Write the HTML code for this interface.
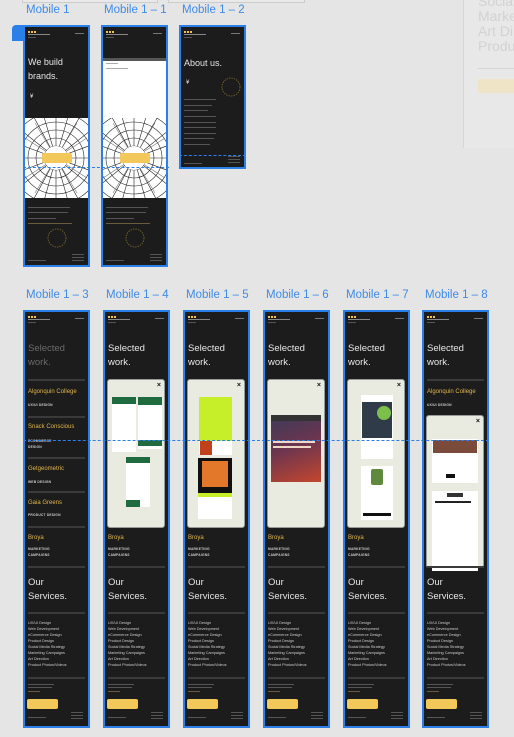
<!DOCTYPE html>
<html><head><meta charset="utf-8">
<style>
*{margin:0;padding:0;box-sizing:border-box}
body{width:514px;height:737px;background:#e5e5e5;position:relative;overflow:hidden;font-family:"Liberation Sans",sans-serif}
.lbl{position:absolute;color:#3d8be8;font-size:11.5px;white-space:nowrap}
.f{position:absolute;width:67px;border:2px solid #2b7fe9;background:#1c1c1c;overflow:hidden}
.f>*{position:absolute}
.logo{left:3px;top:4px;width:24px;height:8px}
.logo i{position:absolute;top:0;width:2px;height:2px;background:#f2c14e}
.logo b{position:absolute;top:3px;left:0;width:22px;height:1px;background:#888}
.logo s{position:absolute;top:6px;left:0;width:8px;height:1px;background:#555}
.nav{right:4px;top:6px;width:9px;height:1px;background:#777}
.big{left:3px;font-size:9.5px;line-height:14px;color:#e6e6e6;white-space:nowrap}
.hr{left:3px;width:57px;height:2px;background:#3a3a3a}
.y{left:3px;font-size:6px;color:#e2b54a;white-space:nowrap}
.cap{left:3px;font-size:3.3px;font-weight:bold;color:#ccc;line-height:6px;letter-spacing:.2px;white-space:nowrap}
.list{left:3px;font-size:3.8px;line-height:6px;color:#ccc;white-space:nowrap}
.sm{left:3px;width:30px;height:1px;background:#555}
.btn{left:2px;width:31px;height:10px;background:#f3c85a;border-radius:2px}
.ft{height:1px;background:#555}
.modal{left:2px;width:58px;background:#e9ebe0;border-radius:3px;border:1px solid #9a9a9a}
.x{position:absolute;right:3px;top:2px;font-size:7px;font-weight:bold;color:#111}
.dash{position:absolute;height:0;border-top:1px dashed #2b7fe9}
</style></head><body>

<div style="position:absolute;left:22px;top:0;width:136px;height:3px;border:1px solid #ccc;border-top:0;background:#e9e9e9"></div>
<div style="position:absolute;left:168px;top:0;width:137px;height:3px;border:1px solid #ccc;border-top:0;background:#e9e9e9"></div>
<div style="position:absolute;left:463px;top:0;width:51px;height:148px;background:#e8e8e8;border-left:1px solid #d6d6d6;color:#d2d2d2;font-size:14px;line-height:15px;padding:0 0 0 14px;white-space:nowrap;overflow:hidden">
<div style="margin-top:-6px">Social M</div><div>Marketi</div><div>Art Dire</div><div>Product</div>
<div style="margin-top:14px;width:40px;height:1px;background:#d6d6d6"></div>
<div style="margin-top:10px;width:40px;height:14px;background:#efe5c6"></div>
</div>

<div class="lbl" style="left:26px;top:4px">Mobile 1</div>
<div class="lbl" style="left:104px;top:4px">Mobile 1 – 1</div>
<div class="lbl" style="left:182px;top:4px">Mobile 1 – 2</div>
<div style="position:absolute;left:12px;top:25px;width:13px;height:16px;background:#2b7fe9;border-radius:4px 0 0 0"></div>

<svg width="0" height="0" style="position:absolute"><defs>
<g id="pat">
<rect width="63" height="80" fill="#fff"/>
<g stroke="#222" stroke-width=".6" fill="none">
<circle cx="31" cy="40" r="12"/><circle cx="31" cy="40" r="20"/><circle cx="31" cy="40" r="28"/><circle cx="31" cy="40" r="36"/><circle cx="31" cy="40" r="46"/>
<path d="M31 40L31 -10M31 40L45 -8M31 40L57 -5M31 40L75 5M31 40L80 22M31 40L80 40M31 40L80 58M31 40L75 75M31 40L57 88M31 40L45 90M31 40L31 90M31 40L17 90M31 40L5 88M31 40L-13 75M31 40L-18 58M31 40L-18 40M31 40L-18 22M31 40L-13 5M31 40L5 -8M31 40L17 -8"/>
<path d="M10 5L52 75M52 5L10 75M0 20L62 60M0 60L62 20" stroke="#777"/>
</g>
<circle cx="31" cy="40" r="12" fill="#fff"/>
<rect x="17" y="35" width="30" height="10" rx="2" fill="#f3c85a"/>
</g></defs></svg>

<!-- Mobile 1 -->
<div class="f" style="left:23px;top:25px;height:242px">
<div class="logo"><i style="left:0"></i><i style="left:3px"></i><i style="left:6px"></i><b></b><s></s></div><div class="nav"></div>
<div class="big" style="top:28px;font-size:9px">We build<br>brands.</div>
<div style="left:5px;top:67px;color:#ddd;font-size:6px">¥</div>
<svg style="left:0;top:91px" width="63" height="80"><use href="#pat"/></svg>
<div class="sm" style="top:180px;width:42px"></div><div class="sm" style="top:185px;width:40px"></div><div class="sm" style="top:191px;width:28px"></div><div class="sm" style="top:196px;width:44px;background:#6a5d3e"></div>
<svg style="left:21px;top:200px" width="22" height="22"><circle cx="11" cy="11" r="9" fill="none" stroke="#6e5c2c" stroke-width="1" stroke-dasharray="1.5 1"/></svg>
<div class="ft" style="left:3px;top:233px;width:18px"></div>
<div class="ft" style="left:47px;top:227px;width:12px"></div><div class="ft" style="left:47px;top:230px;width:12px"></div><div class="ft" style="left:47px;top:233px;width:12px"></div>
</div>

<!-- Mobile 1-1 -->
<div class="f" style="left:101px;top:25px;height:242px">
<div class="logo"><i style="left:0"></i><i style="left:3px"></i><i style="left:6px"></i><b></b><s></s></div><div class="nav"></div>
<div style="left:0;top:31px;width:63px;height:61px;background:#fff"></div>
<div style="left:0;top:31px;width:63px;height:3px;background:#555"></div>
<div style="left:3px;top:36px;width:12px;height:1px;background:#aaa"></div>
<div style="left:3px;top:41px;width:22px;height:1px;background:#aaa"></div>
<svg style="left:0;top:91px" width="63" height="80"><use href="#pat"/></svg>
<div class="sm" style="top:180px;width:42px"></div><div class="sm" style="top:185px;width:40px"></div><div class="sm" style="top:191px;width:28px"></div><div class="sm" style="top:196px;width:44px;background:#6a5d3e"></div>
<svg style="left:21px;top:200px" width="22" height="22"><circle cx="11" cy="11" r="9" fill="none" stroke="#6e5c2c" stroke-width="1" stroke-dasharray="1.5 1"/></svg>
<div class="ft" style="left:3px;top:233px;width:18px"></div>
<div class="ft" style="left:47px;top:227px;width:12px"></div><div class="ft" style="left:47px;top:230px;width:12px"></div><div class="ft" style="left:47px;top:233px;width:12px"></div>
</div>

<!-- Mobile 1-2 -->
<div class="f" style="left:179px;top:25px;height:144px">
<div class="logo"><i style="left:0"></i><i style="left:3px"></i><i style="left:6px"></i><b></b><s></s></div><div class="nav"></div>
<div class="big" style="top:29px;font-size:9px">About us.</div>
<div style="left:5px;top:53px;color:#ddd;font-size:6px">¥</div>
<svg style="left:39px;top:49px" width="22" height="22"><circle cx="11" cy="11" r="9" fill="none" stroke="#6e5c2c" stroke-width="1" stroke-dasharray="1.5 1"/></svg>
<div class="sm" style="top:72px;width:32px"></div><div class="sm" style="top:78px;width:28px"></div><div class="sm" style="top:83px;width:24px"></div><div class="sm" style="top:89px;width:32px"></div><div class="sm" style="top:95px;width:32px"></div><div class="sm" style="top:100px;width:32px"></div><div class="sm" style="top:106px;width:32px"></div><div class="sm" style="top:111px;width:30px"></div><div class="sm" style="top:117px;width:26px"></div>
<div class="ft" style="left:3px;top:136px;width:18px"></div>
<div class="ft" style="left:47px;top:129px;width:12px"></div><div class="ft" style="left:47px;top:132px;width:12px"></div><div class="ft" style="left:47px;top:135px;width:12px"></div>
</div>
<div class="dash" style="left:23px;top:167px;width:146px"></div>
<div class="dash" style="left:179px;top:155px;width:67px"></div>

<!-- Row 2 labels -->
<div class="lbl" style="left:26px;top:289px">Mobile 1 – 3</div>
<div class="lbl" style="left:106px;top:289px">Mobile 1 – 4</div>
<div class="lbl" style="left:186px;top:289px">Mobile 1 – 5</div>
<div class="lbl" style="left:266px;top:289px">Mobile 1 – 6</div>
<div class="lbl" style="left:346px;top:289px">Mobile 1 – 7</div>
<div class="lbl" style="left:425px;top:289px">Mobile 1 – 8</div>

<!-- Mobile 1-3 -->
<div class="f" style="left:23px;top:310px;height:418px">
<div class="logo"><i style="left:0"></i><i style="left:3px"></i><i style="left:6px"></i><b></b><s></s></div><div class="nav"></div>
<div class="big" style="top:30px;color:#6a6a6a">Selected<br>work.</div>
<div class="hr" style="top:67px"></div>
<div class="y" style="top:77px">Algonquin College</div><div class="cap" style="top:90px">UX/UI DESIGN</div>
<div class="hr" style="top:104px"></div>
<div class="y" style="top:112px">Snack Conscious</div><div class="cap" style="top:126px">ECOMMERCE<br>DESIGN</div>
<div class="hr" style="top:145px"></div>
<div class="y" style="top:154px">Getgeometric</div><div class="cap" style="top:167px">WEB DESIGN</div>
<div class="hr" style="top:179px"></div>
<div class="y" style="top:188px">Gaia Greens</div><div class="cap" style="top:200px">PRODUCT DESIGN</div>
<div class="hr" style="top:214px"></div>
<div class="y" style="top:223px">Broya</div><div class="cap" style="top:234px">MARKETING<br>CAMPAIGNS</div>
<div class="hr" style="top:254px"></div>
<div class="big" style="top:264px">Our<br>Services.</div>
<div class="hr" style="top:300px"></div>
<div class="list" style="top:308px">UX/UI Design<br>Web Development<br>eCommerce Design<br>Product Design<br>Social Media Strategy<br>Marketing Campaigns<br>Art Direction<br>Product Photos/Videos</div>
<div class="hr" style="top:365px"></div>
<div class="sm" style="top:372px;width:26px"></div><div class="sm" style="top:375px;width:24px"></div><div class="sm" style="top:379px;width:12px;background:#6a5d3e"></div>
<div class="btn" style="top:387px"></div>
<div class="ft" style="left:3px;top:405px;width:18px"></div>
<div class="ft" style="left:46px;top:400px;width:12px"></div><div class="ft" style="left:46px;top:403px;width:12px"></div><div class="ft" style="left:46px;top:406px;width:12px"></div>
</div>

<div class="f" style="left:103px;top:310px;height:418px">
<div class="logo"><i style="left:0"></i><i style="left:3px"></i><i style="left:6px"></i><b></b><s></s></div><div class="nav"></div>
<div class="big" style="top:30px">Selected<br>work.</div>
<div class="modal" style="top:67px;height:149px"><span class="x">×</span>
<div style="position:absolute;left:4px;top:17px;width:24px;height:55px;background:#fff"></div>
<div style="position:absolute;left:4px;top:17px;width:24px;height:7px;background:#1f6b3f"></div>
<div style="position:absolute;left:30px;top:17px;width:24px;height:52px;background:#fff"></div>
<div style="position:absolute;left:30px;top:17px;width:24px;height:8px;background:#1f6b3f"></div>
<div style="position:absolute;left:30px;top:60px;width:24px;height:6px;background:#1f6b3f"></div>
<div style="position:absolute;left:18px;top:77px;width:24px;height:50px;background:#fff"></div>
<div style="position:absolute;left:18px;top:77px;width:24px;height:6px;background:#1f6b3f"></div>
<div style="position:absolute;left:18px;top:120px;width:14px;height:7px;background:#1f6b3f"></div>
</div>
<div class="y" style="top:223px">Broya</div><div class="cap" style="top:234px">MARKETING<br>CAMPAIGNS</div>
<div class="hr" style="top:254px"></div>
<div class="big" style="top:264px">Our<br>Services.</div>
<div class="hr" style="top:300px"></div>
<div class="list" style="top:308px">UX/UI Design<br>Web Development<br>eCommerce Design<br>Product Design<br>Social Media Strategy<br>Marketing Campaigns<br>Art Direction<br>Product Photos/Videos</div>
<div class="hr" style="top:365px"></div>
<div class="sm" style="top:372px;width:26px"></div><div class="sm" style="top:375px;width:24px"></div><div class="sm" style="top:379px;width:12px;background:#6a5d3e"></div>
<div class="btn" style="top:387px"></div>
<div class="ft" style="left:3px;top:405px;width:18px"></div>
<div class="ft" style="left:46px;top:400px;width:12px"></div><div class="ft" style="left:46px;top:403px;width:12px"></div><div class="ft" style="left:46px;top:406px;width:12px"></div>
</div>

<div class="f" style="left:183px;top:310px;height:418px">
<div class="logo"><i style="left:0"></i><i style="left:3px"></i><i style="left:6px"></i><b></b><s></s></div><div class="nav"></div>
<div class="big" style="top:30px">Selected<br>work.</div>
<div class="modal" style="top:67px;height:149px"><span class="x">×</span>
<div style="position:absolute;left:11px;top:17px;width:33px;height:44px;background:#c6ef2a"></div>
<div style="position:absolute;left:11px;top:61px;width:33px;height:14px;background:#fff"></div>
<div style="position:absolute;left:12px;top:61px;width:12px;height:14px;background:#c2401c"></div>
<div style="position:absolute;left:10px;top:78px;width:34px;height:38px;background:#111"></div>
<div style="position:absolute;left:14px;top:81px;width:26px;height:26px;background:#e3782a"></div>
<div style="position:absolute;left:10px;top:113px;width:34px;height:4px;background:#c6ef2a"></div>
<div style="position:absolute;left:10px;top:117px;width:34px;height:22px;background:#fff"></div>
</div>
<div class="y" style="top:223px">Broya</div><div class="cap" style="top:234px">MARKETING<br>CAMPAIGNS</div>
<div class="hr" style="top:254px"></div>
<div class="big" style="top:264px">Our<br>Services.</div>
<div class="hr" style="top:300px"></div>
<div class="list" style="top:308px">UX/UI Design<br>Web Development<br>eCommerce Design<br>Product Design<br>Social Media Strategy<br>Marketing Campaigns<br>Art Direction<br>Product Photos/Videos</div>
<div class="hr" style="top:365px"></div>
<div class="sm" style="top:372px;width:26px"></div><div class="sm" style="top:375px;width:24px"></div><div class="sm" style="top:379px;width:12px;background:#6a5d3e"></div>
<div class="btn" style="top:387px"></div>
<div class="ft" style="left:3px;top:405px;width:18px"></div>
<div class="ft" style="left:46px;top:400px;width:12px"></div><div class="ft" style="left:46px;top:403px;width:12px"></div><div class="ft" style="left:46px;top:406px;width:12px"></div>
</div>

<div class="f" style="left:263px;top:310px;height:418px">
<div class="logo"><i style="left:0"></i><i style="left:3px"></i><i style="left:6px"></i><b></b><s></s></div><div class="nav"></div>
<div class="big" style="top:30px">Selected<br>work.</div>
<div class="modal" style="top:67px;height:149px"><span class="x">×</span>
<div style="position:absolute;left:3px;top:35px;width:50px;height:67px;background:linear-gradient(160deg,#3b3b58 0%,#6a3550 45%,#c4462e 100%)"></div>
<div style="position:absolute;left:3px;top:35px;width:50px;height:6px;background:#333"></div>
<div style="position:absolute;left:5px;top:61px;width:42px;height:2px;background:#f0d8c8"></div>
<div style="position:absolute;left:5px;top:66px;width:38px;height:2px;background:#f0d8c8"></div>
</div>
<div class="y" style="top:223px">Broya</div><div class="cap" style="top:234px">MARKETING<br>CAMPAIGNS</div>
<div class="hr" style="top:254px"></div>
<div class="big" style="top:264px">Our<br>Services.</div>
<div class="hr" style="top:300px"></div>
<div class="list" style="top:308px">UX/UI Design<br>Web Development<br>eCommerce Design<br>Product Design<br>Social Media Strategy<br>Marketing Campaigns<br>Art Direction<br>Product Photos/Videos</div>
<div class="hr" style="top:365px"></div>
<div class="sm" style="top:372px;width:26px"></div><div class="sm" style="top:375px;width:24px"></div><div class="sm" style="top:379px;width:12px;background:#6a5d3e"></div>
<div class="btn" style="top:387px"></div>
<div class="ft" style="left:3px;top:405px;width:18px"></div>
<div class="ft" style="left:46px;top:400px;width:12px"></div><div class="ft" style="left:46px;top:403px;width:12px"></div><div class="ft" style="left:46px;top:406px;width:12px"></div>
</div>

<div class="f" style="left:343px;top:310px;height:418px">
<div class="logo"><i style="left:0"></i><i style="left:3px"></i><i style="left:6px"></i><b></b><s></s></div><div class="nav"></div>
<div class="big" style="top:30px">Selected<br>work.</div>
<div class="modal" style="top:67px;height:149px"><span class="x">×</span>
<div style="position:absolute;left:13px;top:15px;width:32px;height:64px;background:#fff"></div>
<div style="position:absolute;left:14px;top:22px;width:30px;height:36px;background:#2f3b48"></div>
<div style="position:absolute;left:29px;top:26px;width:14px;height:14px;border-radius:50%;background:#7bc04a"></div>
<div style="position:absolute;left:13px;top:86px;width:32px;height:54px;background:#fff"></div>
<div style="position:absolute;left:23px;top:89px;width:12px;height:16px;border-radius:2px;background:#5f8a3e"></div>
<div style="position:absolute;left:15px;top:133px;width:28px;height:3px;background:#111"></div>
</div>
<div class="y" style="top:223px">Broya</div><div class="cap" style="top:234px">MARKETING<br>CAMPAIGNS</div>
<div class="hr" style="top:254px"></div>
<div class="big" style="top:264px">Our<br>Services.</div>
<div class="hr" style="top:300px"></div>
<div class="list" style="top:308px">UX/UI Design<br>Web Development<br>eCommerce Design<br>Product Design<br>Social Media Strategy<br>Marketing Campaigns<br>Art Direction<br>Product Photos/Videos</div>
<div class="hr" style="top:365px"></div>
<div class="sm" style="top:372px;width:26px"></div><div class="sm" style="top:375px;width:24px"></div><div class="sm" style="top:379px;width:12px;background:#6a5d3e"></div>
<div class="btn" style="top:387px"></div>
<div class="ft" style="left:3px;top:405px;width:18px"></div>
<div class="ft" style="left:46px;top:400px;width:12px"></div><div class="ft" style="left:46px;top:403px;width:12px"></div><div class="ft" style="left:46px;top:406px;width:12px"></div>
</div>

<div class="f" style="left:422px;top:310px;height:418px">
<div class="logo"><i style="left:0"></i><i style="left:3px"></i><i style="left:6px"></i><b></b><s></s></div><div class="nav"></div>
<div class="big" style="top:30px">Selected<br>work.</div>
<div class="hr" style="top:67px"></div>
<div class="y" style="top:77px">Algonquin College</div><div class="cap" style="top:90px">UX/UI DESIGN</div>
<div class="modal" style="top:103px;height:153px"><span class="x">×</span>
<div style="position:absolute;left:5px;top:23px;width:46px;height:44px;background:#fff"></div>
<div style="position:absolute;left:6px;top:24px;width:44px;height:13px;background:#7a4a3a"></div>
<div style="position:absolute;left:19px;top:58px;width:9px;height:4px;background:#111"></div>
<div style="position:absolute;left:5px;top:75px;width:46px;height:80px;background:#fff"></div>
<div style="position:absolute;left:20px;top:77px;width:16px;height:4px;background:#333"></div>
<div style="position:absolute;left:8px;top:85px;width:36px;height:2px;background:#222"></div>
</div>
<div class="hr" style="top:254px"></div>
<div class="big" style="top:264px">Our<br>Services.</div>
<div class="hr" style="top:300px"></div>
<div class="list" style="top:308px">UX/UI Design<br>Web Development<br>eCommerce Design<br>Product Design<br>Social Media Strategy<br>Marketing Campaigns<br>Art Direction<br>Product Photos/Videos</div>
<div class="hr" style="top:365px"></div>
<div class="sm" style="top:372px;width:26px"></div><div class="sm" style="top:375px;width:24px"></div><div class="sm" style="top:379px;width:12px;background:#6a5d3e"></div>
<div class="btn" style="top:387px"></div>
<div class="ft" style="left:3px;top:405px;width:18px"></div>
<div class="ft" style="left:46px;top:400px;width:12px"></div><div class="ft" style="left:46px;top:403px;width:12px"></div><div class="ft" style="left:46px;top:406px;width:12px"></div>
</div>

<div class="dash" style="left:23px;top:440px;width:466px"></div>
</body></html>
